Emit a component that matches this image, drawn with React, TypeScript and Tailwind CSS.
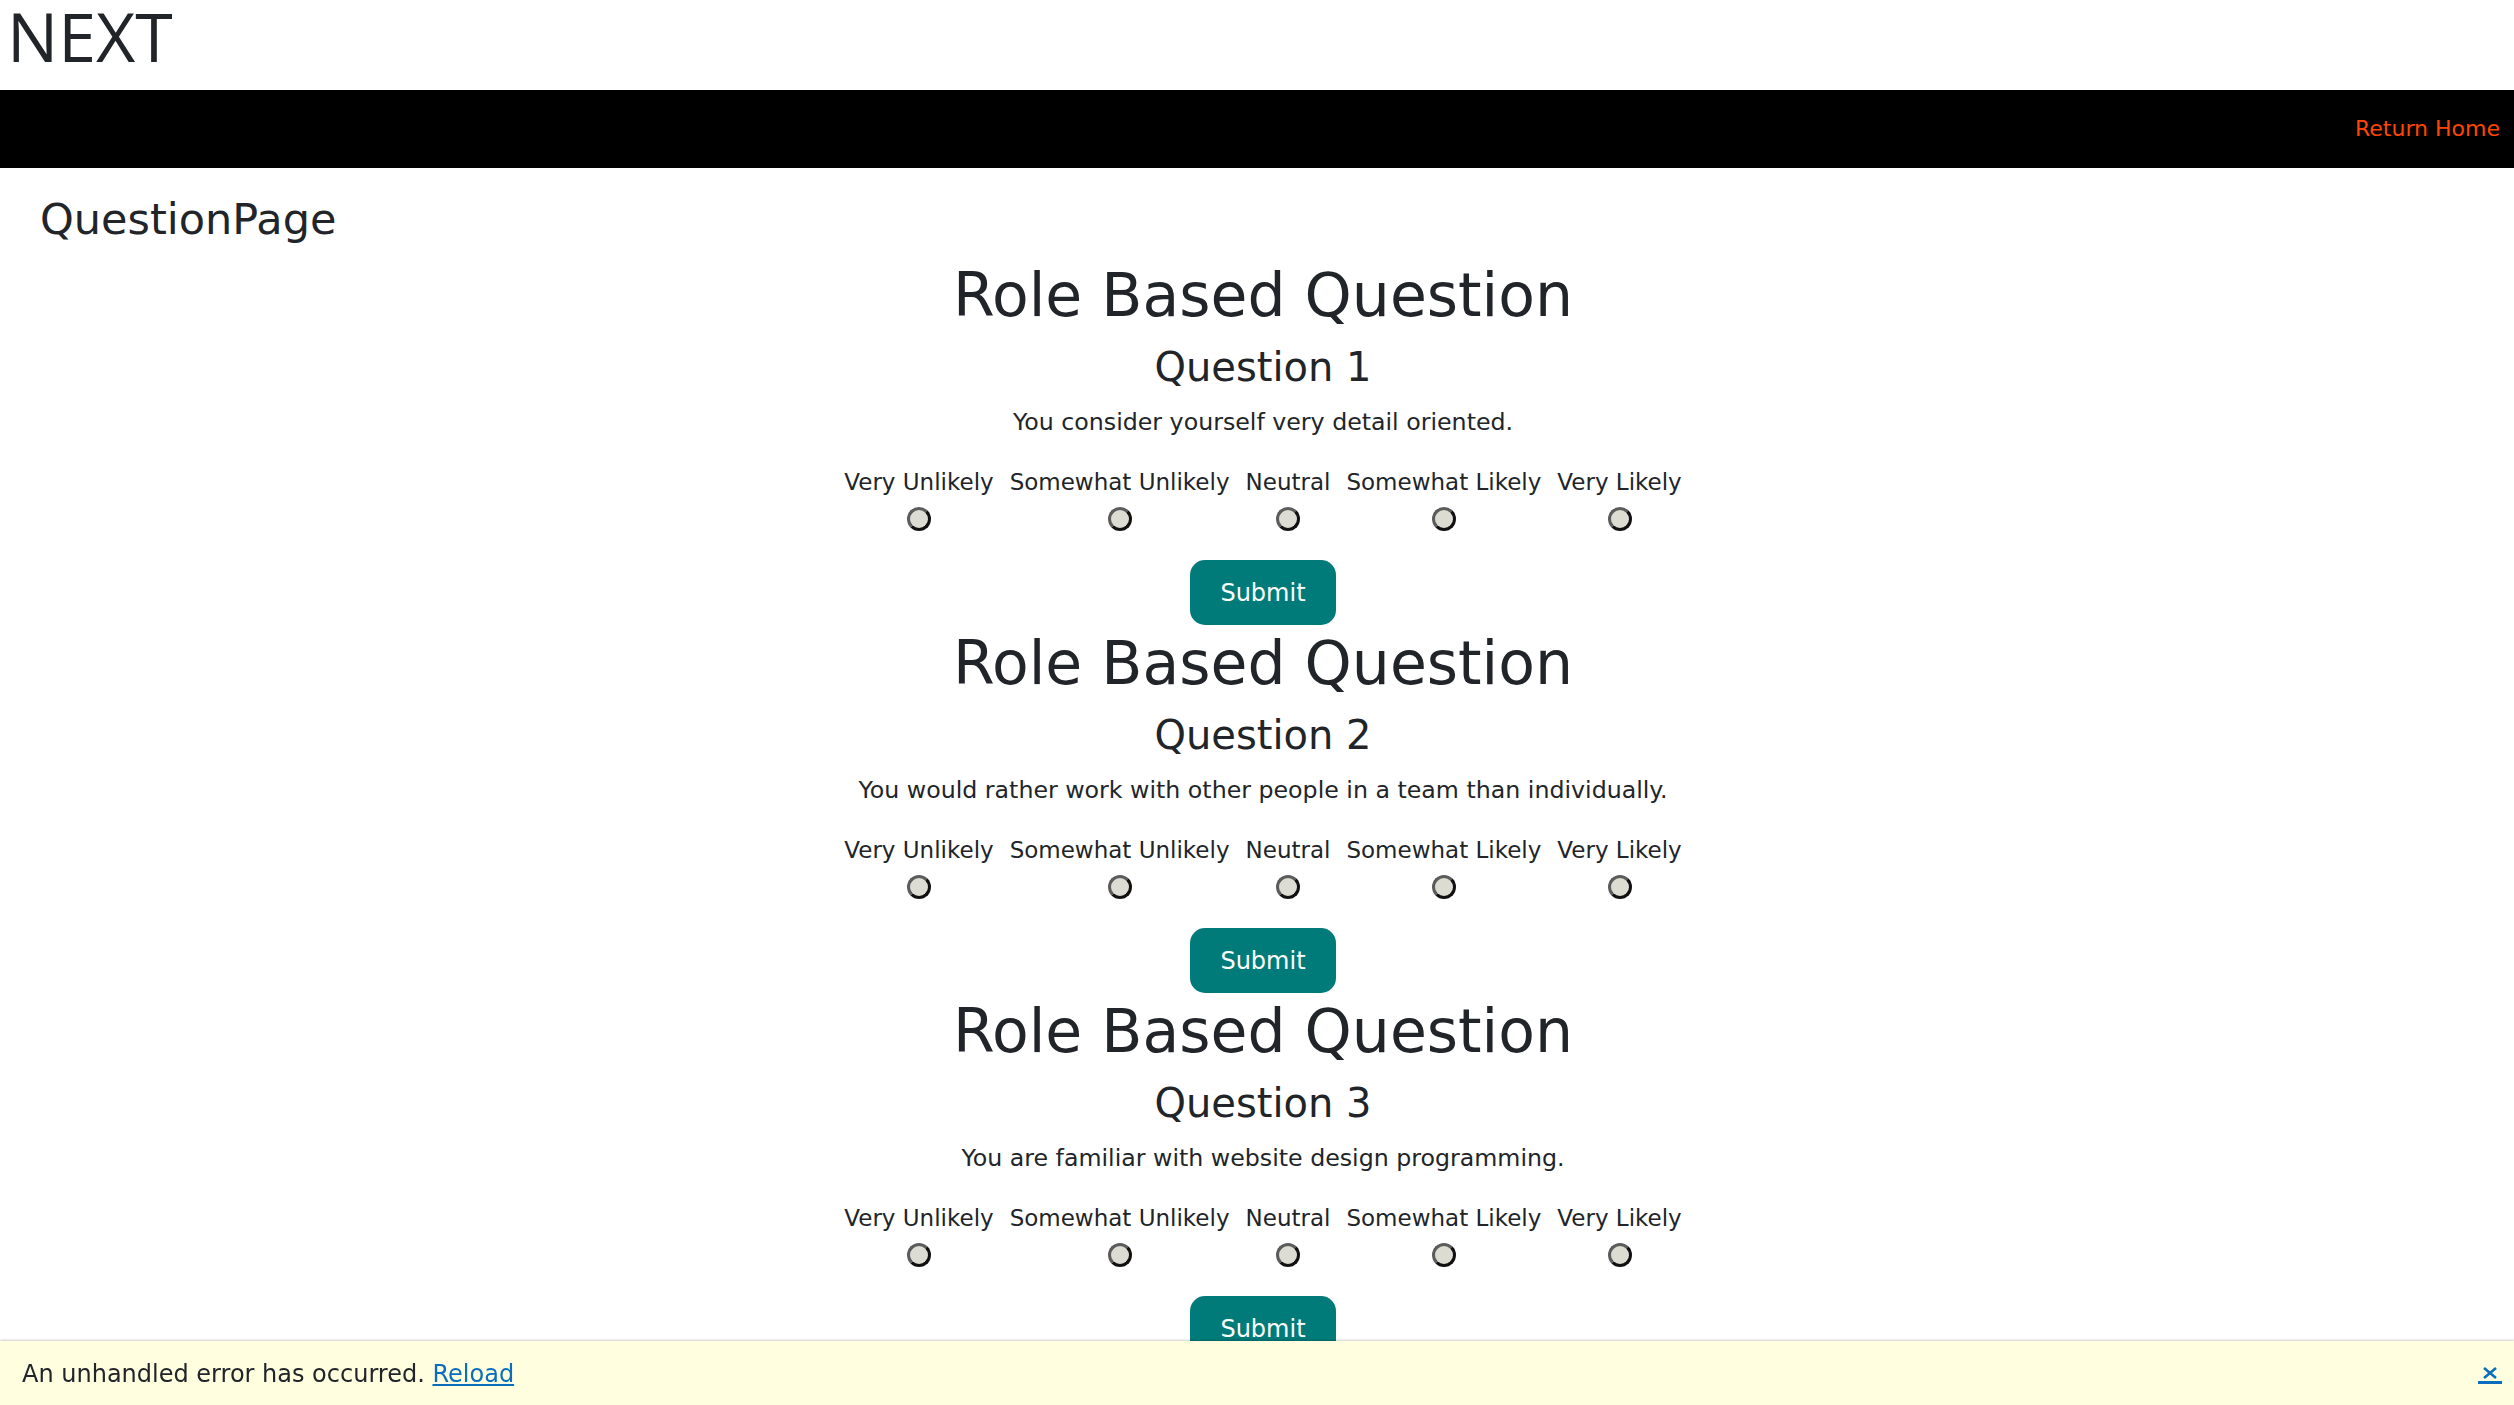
import { useState } from 'react'

const options = ["Very Unlikely", "Somewhat Unlikely", "Neutral", "Somewhat Likely", "Very Likely"]

const questions = [
    "You consider yourself very detail oriented.",
    "You would rather work with other people in a team than individually.",
    "You are familiar with website design programming.",
]

function QuestionBlock({ index, text }: { index: number, text: string }) {
    const [picked, setPicked] = useState<number | null>(null)

    return (
        <div className="flex flex-col items-center">
            <h1 className="text-[60px] leading-[72px] h-[72px] whitespace-nowrap">Role Based Question</h1>
            <h2 className="mt-[12px] text-[40px] leading-[48px] h-[48px] whitespace-nowrap">Question {index}</h2>
            <p className="mt-[15px] text-[23.7px] leading-[32px] h-[32px] whitespace-nowrap">{text}</p>

            <div className="mt-[28px] flex gap-[16px]">
                {options.map((label, i) => (
                    <label key={label} className="flex flex-col items-center cursor-pointer">
                        <span className="text-[23px] leading-[32px] h-[32px] whitespace-nowrap">{label}</span>
                        <input
                            type="radio"
                            name={`question-${index}`}
                            checked={picked === i}
                            onChange={() => setPicked(i)}
                            className="mt-[9px] appearance-none w-[24px] h-[24px] rounded-full border-[3px] border-t-[#5c5c5c] border-l-[#5c5c5c] border-r-[#111] border-b-[#111] bg-[#dddcd2] checked:bg-[#017b79]"
                        />
                    </label>
                ))}
            </div>

            <button className="mt-[29px] w-[146px] h-[65px] rounded-[15px] bg-[#017b79] text-white text-[24px] leading-none">
                Submit
            </button>
        </div>
    )
}

export default function App() {
    const [showError, setShowError] = useState(true)

    return (
        <div className="min-h-screen bg-white text-[#212529] font-['DejaVu_Sans',sans-serif]">
            {/* Header */}
            <div className="h-[90px] pt-[2px] pl-[7px]">
                <div className="font-['Open_Sans',sans-serif] font-medium text-[68px] leading-[68px]">NEXT</div>
            </div>

            {/* Nav */}
            <div className="h-[78px] bg-black flex items-center justify-end pr-[14px]">
                <a href="#" className="text-[#ff4500] text-[22px] leading-none">Return Home</a>
            </div>

            {/* Page */}
            <div className="mt-[26px] pl-[40px]">
                <h3 className="text-[43px] leading-[50px] h-[50px]">QuestionPage</h3>
            </div>

            <div className="mt-[15px] pl-[12px] pb-[80px] flex flex-col gap-[2px]">
                {questions.map((q, i) => (
                    <QuestionBlock key={i} index={i + 1} text={q} />
                ))}
            </div>

            {/* Error UI */}
            {showError ? (
                <div className="fixed bottom-0 left-0 right-0 h-[64px] bg-[#ffffe0] shadow-[0_-1px_2px_rgba(0,0,0,0.2)] pt-[17px] pl-[22px]">
                    <span className="text-[24px] leading-[32px]">
                        An unhandled error has occurred. <a href="#" className="text-[#0a6ebd] underline">Reload</a>
                    </span>
                    <button
                        onClick={() => setShowError(false)}
                        className="absolute right-[12px] top-[26px] w-[24px] h-[17px] border-b-[3px] border-[#0a6ebd] flex items-start justify-center"
                    >
                        <svg viewBox="0 0 16 12" className="w-[18px] h-[12px]" fill="none" stroke="#0a6ebd" strokeWidth="2.6">
                            <path d="M2 1 L14 11 M14 1 L2 11" />
                        </svg>
                    </button>
                </div>
            ) : null}
        </div>
    )
}
